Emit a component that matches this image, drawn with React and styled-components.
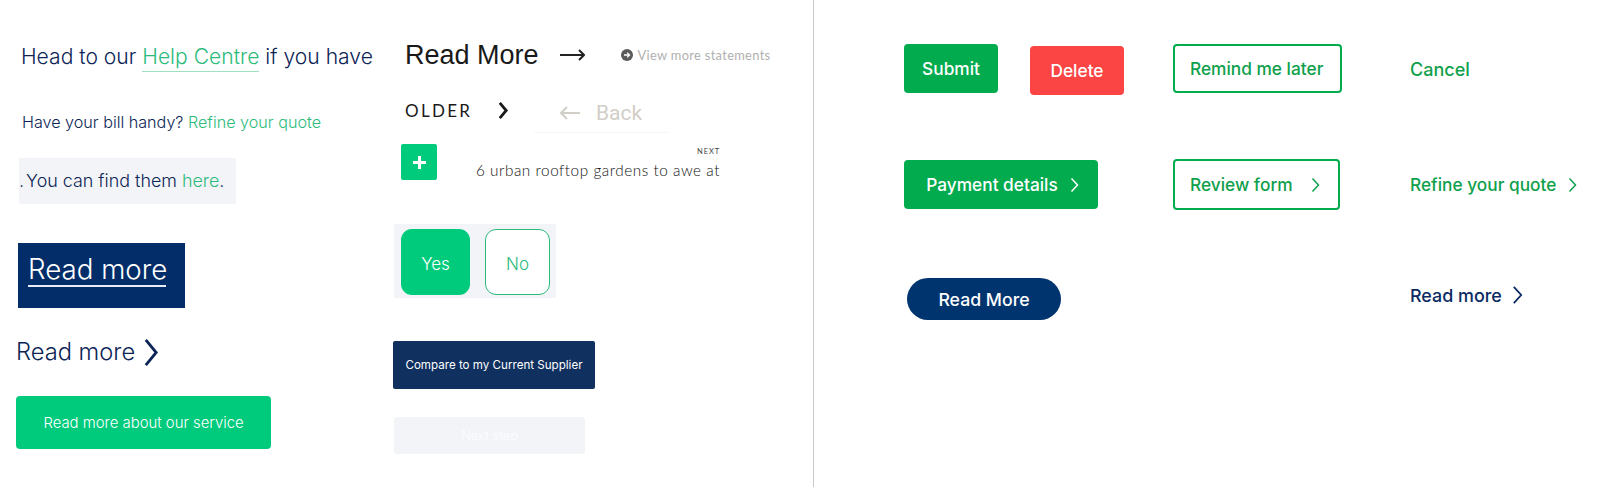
import React from 'react';
import styled, { createGlobalStyle } from 'styled-components';

const GlobalStyle = createGlobalStyle`
  html, body { margin: 0; padding: 0; background: #fff; }
  body { font-family: Inter, "Noto Sans", sans-serif; }
`;

const navy = '#0c2556';
const mint = '#00cb7d';
const link = '#2dbb7c';
const green = '#03ab4f';
const greenText = '#0fa04c';

const Page = styled.div`
  width: 1600px;
  height: 487px;
  display: flex;
  overflow: hidden;
`;

const LeftPanel = styled.section`
  width: 813px;
  height: 487px;
  flex: none;
  display: flex;
  border-right: 1px solid #c9c9c9;
  box-sizing: content-box;
`;

const CopyColumn = styled.div`
  width: 393px;
  flex: none;
  display: flex;
  flex-direction: column;
  align-items: flex-start;
`;

const MixedColumn = styled.div`
  flex: 1;
  display: flex;
  flex-direction: column;
  align-items: flex-start;
`;

const HeadLine = styled.p`
  margin: 43px 0 0 21px;
  font-size: 21.1px;
  font-weight: 300;
  line-height: 28px;
  color: ${navy};
  white-space: nowrap;
`;

const HelpLink = styled.a`
  color: ${link};
  border-bottom: 1px solid #9fe0c2;
  padding-bottom: 2px;
`;

const BillLine = styled.p`
  margin: 40px 0 0 22px;
  font-size: 16.15px;
  font-weight: 300;
  line-height: 22px;
  color: ${navy};
  white-space: nowrap;
`;

const TextLink = styled.a`
  color: ${link};
`;

const FindBox = styled.p`
  margin: 25px 0 0 19px;
  width: 217px;
  height: 46px;
  box-sizing: border-box;
  background: #f3f4f8;
  font-size: 17.9px;
  font-weight: 300;
  line-height: 46px;
  color: ${navy};
  white-space: nowrap;
`;

const FindDot = styled.span`
  margin-right: -3px;
`;

const NavyBlock = styled.a`
  margin: 39px 0 0 18px;
  width: 167px;
  height: 65px;
  box-sizing: border-box;
  padding: 11px 0 0 10px;
  background: #032d69;
  color: #fff;
  font-size: 27.7px;
  font-weight: 300;
  line-height: 30px;
`;

const BlockLabel = styled.span`
  display: inline-block;
  width: 138px;
  border-bottom: 2px solid #e8edf5;
  padding-bottom: 1px;
  white-space: nowrap;
`;

const LargeLink = styled.a`
  margin: 28px 0 0 16px;
  display: flex;
  align-items: center;
  gap: 8px;
  font-size: 23.7px;
  font-weight: 300;
  line-height: 32px;
  color: ${navy};
`;

const ServiceButton = styled.button`
  margin: 28px 0 0 16px;
  width: 255px;
  height: 53px;
  border: 0;
  border-radius: 4px;
  background: ${mint};
  color: #fff;
  font: 300 14.9px Inter, sans-serif;
`;

const TopRow = styled.div`
  margin: 37px 0 0 12px;
  display: flex;
  align-items: center;
`;

const ArialLink = styled.a`
  font-family: "Liberation Sans", Arial, sans-serif;
  font-size: 27px;
  line-height: 36px;
  color: #191919;
`;

const ArrowWrap = styled.span`
  margin-left: 21px;
  display: flex;
`;

const Statement = styled.a`
  margin-left: 36px;
  display: flex;
  align-items: center;
  gap: 5px;
  font-family: Lato, sans-serif;
  font-size: 12.8px;
  letter-spacing: 0.35px;
  color: #b0b0b0;
  white-space: nowrap;
`;

const SecondRow = styled.div`
  margin: 20px 0 0 12px;
  display: flex;
  align-items: flex-start;
`;

const OlderLink = styled.a`
  width: 92px;
  margin-top: 5px;
  font-family: Lato, sans-serif;
  font-size: 17px;
  letter-spacing: 2.3px;
  line-height: 26px;
  color: #1a1a1a;
`;

const ChevronSlot = styled.span`
  display: flex;
  margin-top: 7px;
`;

const BackLink = styled.a`
  margin-left: 25px;
  width: 135px;
  height: 40px;
  display: flex;
  align-items: center;
  gap: 16px;
  padding-left: 26px;
  box-sizing: border-box;
  border-bottom: 1px solid #f7f7f7;
  font-family: Roboto, sans-serif;
  font-size: 21px;
  color: #d2cec8;
`;

const NextRow = styled.div`
  margin: 11px 0 0 8px;
  display: flex;
  width: 319px;
  justify-content: space-between;
`;

const PlusButton = styled.button`
  width: 36px;
  height: 36px;
  padding: 0;
  border: 0;
  border-radius: 2px;
  background: ${mint};
  display: flex;
  align-items: center;
  justify-content: center;
`;

const NextText = styled.div`
  display: flex;
  flex-direction: column;
  align-items: flex-end;
`;

const NextLabel = styled.span`
  margin-top: 3px;
  font-family: Lato, sans-serif;
  font-size: 7.5px;
  letter-spacing: 0.9px;
  line-height: 10px;
  color: #444;
`;

const NextTitle = styled.span`
  margin-top: 3px;
  font-family: Lato, sans-serif;
  font-size: 15.3px;
  font-weight: 300;
  letter-spacing: 0.55px;
  line-height: 20px;
  color: #111;
  white-space: nowrap;
`;

const ChoiceBox = styled.div`
  margin: 44px 0 0 1px;
  width: 162px;
  height: 74px;
  box-sizing: border-box;
  padding: 5px 6px 3px 7px;
  background: #f3f4f8;
  display: flex;
  justify-content: space-between;
`;

const Choice = styled.button`
  width: ${(p) => (p.$filled ? '69px' : '65px')};
  height: 66px;
  padding: 3px 0 0;
  border: ${(p) => (p.$filled ? '0' : `1.5px solid ${link}`)};
  border-radius: 11px;
  background: ${(p) => (p.$filled ? mint : '#fff')};
  color: ${(p) => (p.$filled ? '#fff' : link)};
  font: 300 17px Inter, sans-serif;
`;

const CompareButton = styled.button`
  margin: 43px 0 0 0;
  width: 202px;
  height: 48px;
  border: 0;
  border-radius: 2px;
  background: #10305f;
  color: #fff;
  font: 400 11.6px Inter, sans-serif;
  white-space: nowrap;
  padding: 0;
`;

const DisabledButton = styled.button`
  margin: 28px 0 0 1px;
  width: 191px;
  height: 37px;
  border: 0;
  border-radius: 3px;
  background: #f3f4f8;
  color: #fbfbfd;
  font: 400 12.5px Inter, sans-serif;
`;

const RightPanel = styled.section`
  flex: 1;
  display: grid;
  grid-template-columns: 90px 269px 237px auto;
  grid-template-rows: 44px 115px 119px;
  align-content: start;
`;

const RowPad = styled.div`
  grid-column: 1 / -1;
  height: 44px;
`;

const ButtonPair = styled.div`
  grid-column: 2;
  display: flex;
  align-items: flex-start;
  gap: 32px;
`;

const SolidButton = styled.button`
  display: flex;
  align-items: center;
  justify-content: center;
  gap: 12px;
  width: ${(p) => p.$w}px;
  height: ${(p) => p.$h || 49}px;
  margin-top: ${(p) => p.$top || 0}px;
  padding: 0 0 0 ${(p) => p.$shift || 0}px;
  border: 0;
  border-radius: 4px;
  background: ${(p) => p.$bg || green};
  color: #fff;
  font: 500 17.3px Inter, sans-serif;
  white-space: nowrap;
`;

const OutlineButton = styled.button`
  grid-column: 3;
  display: flex;
  align-items: center;
  gap: 18px;
  width: ${(p) => p.$w}px;
  height: ${(p) => p.$h || 49}px;
  padding: 0 0 0 15px;
  border: 2px solid ${green};
  border-radius: 4px;
  background: #fff;
  color: ${greenText};
  font: 500 17.3px Inter, sans-serif;
  white-space: nowrap;
`;

const PlainLink = styled.a`
  grid-column: 4;
  display: flex;
  align-items: center;
  gap: ${(p) => p.$gap || 12}px;
  height: ${(p) => p.$h || 49}px;
  color: ${(p) => p.$color || greenText};
  font: 500 ${(p) => p.$size || 17.3}px Inter, sans-serif;
  white-space: nowrap;
`;

const PillButton = styled.button`
  grid-column: 2;
  width: 154px;
  height: 42px;
  padding: 0;
  margin-left: 3px;
  border: 0;
  border-radius: 21px;
  background: #00346f;
  color: #fff;
  font: 500 17.7px Inter, sans-serif;
`;

const ThirdRow = styled.div`
  grid-column: 1 / -1;
  display: grid;
  grid-template-columns: subgrid;
`;

const Spacer = styled.div`
  grid-column: 1;
`;

const Chevron = ({ w, h, color, weight = 2 }) => (
  <svg width={w} height={h} viewBox={`0 0 ${w} ${h}`} fill="none">
    <polyline
      points={`${weight},${weight} ${w - weight},${h / 2} ${weight},${h - weight}`}
      stroke={color}
      strokeWidth={weight}
    />
  </svg>
);

const LongArrow = ({ dir = 'right', w, color, weight = 2 }) => (
  <svg width={w} height="14" viewBox={`0 0 ${w} 14`} fill="none">
    {dir === 'right' ? (
      <path d={`M0 7H${w - 1} M${w - 6} 2L${w - 1} 7L${w - 6} 12`} stroke={color} strokeWidth={weight} />
    ) : (
      <path d={`M${w} 7H1 M7 1L1 7L7 13`} stroke={color} strokeWidth={weight} />
    )}
  </svg>
);

const CircleArrow = () => (
  <svg width="12" height="12" viewBox="0 0 12 12">
    <circle cx="6" cy="6" r="6" fill="#5a5a5a" />
    <path d="M3 6H8.5M6.2 3.6L8.6 6L6.2 8.4" stroke="#fff" strokeWidth="1.3" fill="none" />
  </svg>
);

const PlusIcon = () => (
  <svg width="15" height="15" viewBox="0 0 15 15">
    <path d="M7.5 1V14M1 7.5H14" stroke="#fff" strokeWidth="3" />
  </svg>
);

const App = () => {
  return (
    <Page>
      <GlobalStyle />
      <LeftPanel>
        <CopyColumn>
          <HeadLine>
            Head to our <HelpLink>Help Centre</HelpLink> if you have
          </HeadLine>
          <BillLine>
            Have your bill handy? <TextLink>Refine your quote</TextLink>
          </BillLine>
          <FindBox>
            <FindDot>.</FindDot> You can find them <TextLink>here</TextLink>.
          </FindBox>
          <NavyBlock>
            <BlockLabel>Read more</BlockLabel>
          </NavyBlock>
          <LargeLink>
            Read more
            <Chevron w={16} h={31} color={navy} weight={2.8} />
          </LargeLink>
          <ServiceButton>Read more about our service</ServiceButton>
        </CopyColumn>
        <MixedColumn>
          <TopRow>
            <ArialLink>Read More</ArialLink>
            <ArrowWrap>
              <LongArrow w={25} color="#222" />
            </ArrowWrap>
            <Statement>
              <CircleArrow />
              View more statements
            </Statement>
          </TopRow>
          <SecondRow>
            <OlderLink>OLDER</OlderLink>
            <ChevronSlot>
              <Chevron w={12} h={21} color="#1a1a1a" weight={2.8} />
            </ChevronSlot>
            <BackLink>
              <LongArrow dir="left" w={20} color="#d2cec8" />
              Back
            </BackLink>
          </SecondRow>
          <NextRow>
            <PlusButton>
              <PlusIcon />
            </PlusButton>
            <NextText>
              <NextLabel>NEXT</NextLabel>
              <NextTitle>6 urban rooftop gardens to awe at</NextTitle>
            </NextText>
          </NextRow>
          <ChoiceBox>
            <Choice $filled>Yes</Choice>
            <Choice>No</Choice>
          </ChoiceBox>
          <CompareButton>Compare to my Current Supplier</CompareButton>
          <DisabledButton>Next step</DisabledButton>
        </MixedColumn>
      </LeftPanel>
      <RightPanel>
        <RowPad />
        <ButtonPair>
          <SolidButton $w={94}>Submit</SolidButton>
          <SolidButton $w={94} $top={2} $bg="#fb4444">
            Delete
          </SolidButton>
        </ButtonPair>
        <OutlineButton $w={169}>Remind me later</OutlineButton>
        <PlainLink $size={18} $h={50}>Cancel</PlainLink>
        <ButtonPair>
          <SolidButton $w={194} $top={1} $shift={3}>
            Payment details
            <Chevron w={9} h={16} color="#fff" weight={1.5} />
          </SolidButton>
        </ButtonPair>
        <OutlineButton $w={167} $h={51}>
          Review form
          <Chevron w={9} h={16} color={greenText} weight={1.5} />
        </OutlineButton>
        <PlainLink $h={51}>
          Refine your quote
          <Chevron w={9} h={16} color={greenText} weight={1.5} />
        </PlainLink>
        <ThirdRow>
          <Spacer />
          <PillButton>Read More</PillButton>
          <PlainLink $color="#0b2a63" $h={34} $size={17.9} $gap={10}>
            Read more
            <Chevron w={11} h={20} color="#0b2a63" weight={1.8} />
          </PlainLink>
        </ThirdRow>
      </RightPanel>
    </Page>
  );
};

export default App;
